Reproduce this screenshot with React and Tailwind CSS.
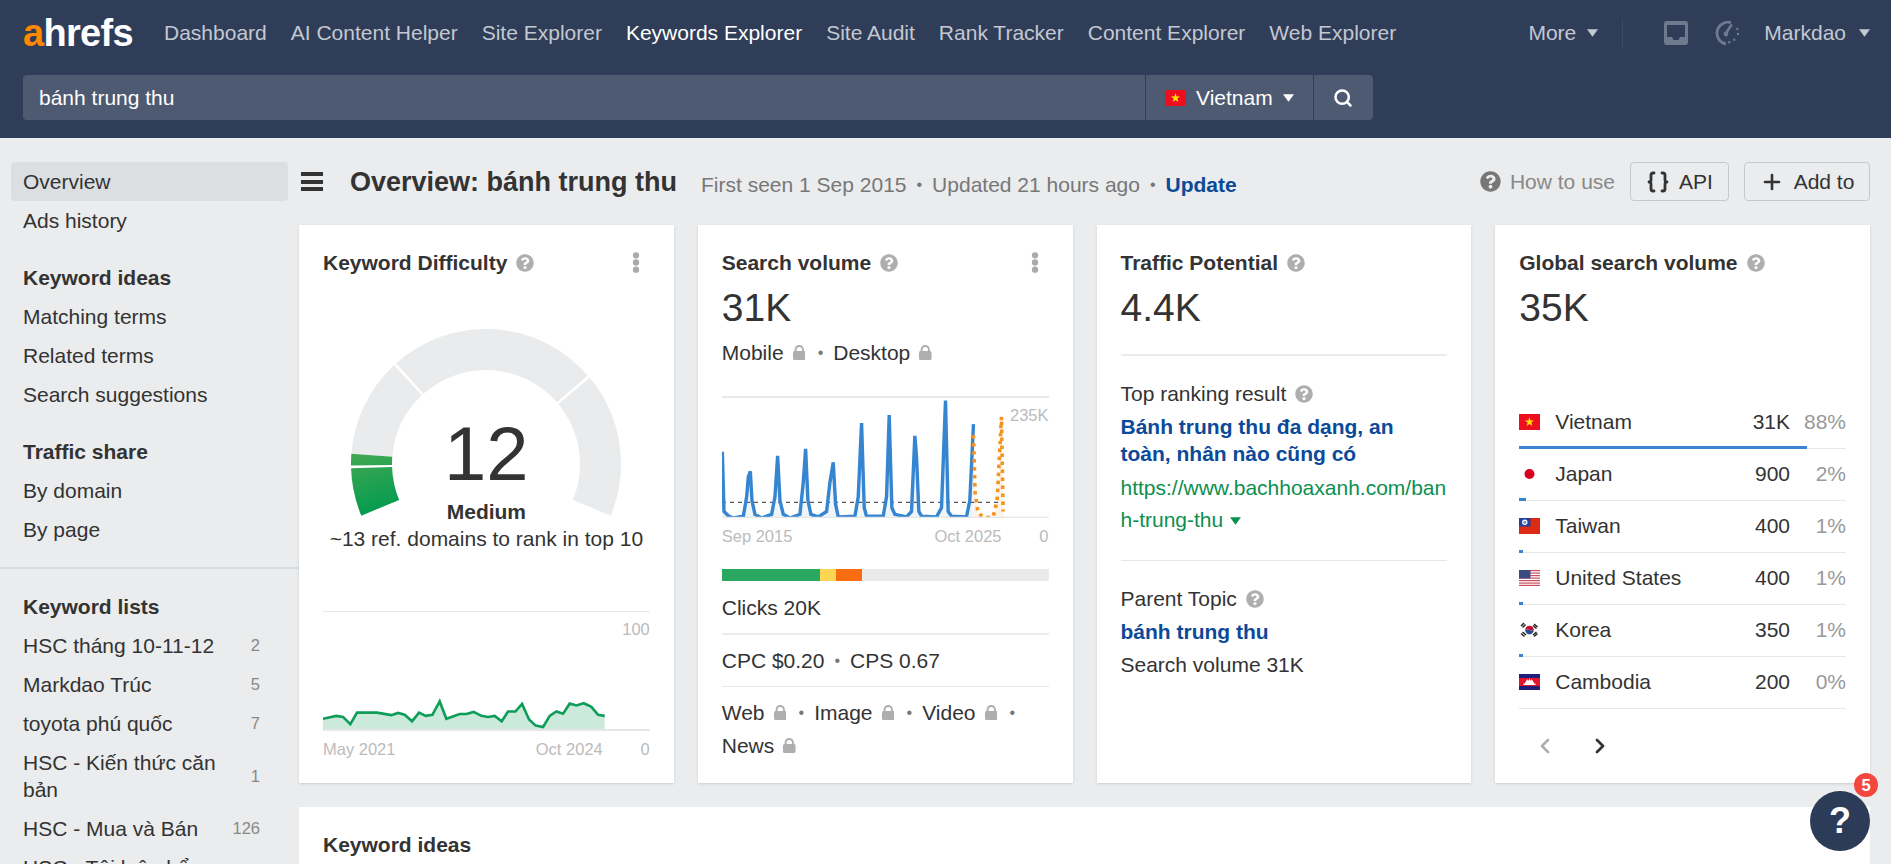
import { Braces, ChevronLeft, ChevronRight, Plus, Search } from "lucide-react";
import { FaQuestionCircle } from "react-icons/fa";

const navItems = ["Dashboard", "AI Content Helper", "Site Explorer", "Keywords Explorer", "Site Audit", "Rank Tracker", "Content Explorer", "Web Explorer"];

const kdPoints = [[100,1373],[140,1365],[160,1368],[182,1388],[202,1356],[262,1356],[305,1363],[325,1357],[345,1362],[367,1380],[388,1356],[408,1365],[428,1362],[450,1325],[470,1373],[510,1360],[530,1360],[552,1354],[575,1365],[595,1368],[615,1365],[636,1380],[655,1353],[677,1353],[697,1332],[718,1375],[738,1392],[760,1396],[780,1365],[800,1353],[820,1359],[840,1331],[860,1336],[882,1330],[905,1340],[925,1362],[945,1365]];

const svPoints = [[97,636],[102,800],[115,812],[130,818],[160,813],[170,760],[175,705],[181,690],[186,770],[195,808],[215,818],[245,808],[255,760],[263,647],[270,770],[280,808],[300,818],[330,808],[340,720],[347,628],[354,770],[363,808],[385,815],[410,800],[420,720],[430,665],[437,780],[445,815],[495,813],[505,760],[515,557],[523,790],[530,813],[580,813],[590,760],[598,535],[606,790],[615,808],[650,815],[665,800],[675,592],[680,650],[687,800],[695,813],[740,815],[755,790],[767,495],[775,800],[785,813],[830,815],[840,770],[851,560]];

const svForecast = [[851,590],[856,750],[865,805],[885,817],[910,815],[922,770],[935,540],[940,800]];

const line = (pts) => pts.map((p) => p.join(",")).join(" ");

const Help = ({ className = "" }) => <FaQuestionCircle className={`text-[18px] text-[#aeaeae] shrink-0 ${className}`} />;

const Caret = ({ className = "" }) => (
  <svg viewBox="0 0 10 7" className={`w-[11px] h-[8px] shrink-0 ${className}`} fill="currentColor"><path d="M0 0h10L5 7z" /></svg>
);

const Dots = () => (
  <svg viewBox="0 0 8 22" className="w-[8px] h-[21px] text-[#aaa] mr-[10px]" fill="currentColor">
    <circle cx="4" cy="3.5" r="3.3" /><circle cx="4" cy="11" r="3.3" /><circle cx="4" cy="18.5" r="3.3" />
  </svg>
);

const Lock = ({ className = "" }) => (
  <svg viewBox="0 0 12.5 15" className={`w-[12.5px] h-[15px] text-[#aeaeae] inline-block shrink-0 ml-[9px] mr-[2.5px] ${className}`} fill="currentColor">
    <path d="M2.6 7V4.6a3.65 3.65 0 0 1 7.3 0V7" fill="none" stroke="currentColor" strokeWidth="1.9" />
    <rect x="0" y="6" width="12.5" height="9" rx="1.5" />
  </svg>
);

const Sep = () => <span className="text-[#777] text-[16px] mx-[10px]">•</span>;

function sector(startDeg, endDeg) {
  const cx = 135, cy = 135, R = 135, r = 94;
  const pt = (rad, deg) => {
    const a = (deg * Math.PI) / 180;
    return `${(cx - rad * Math.cos(a)).toFixed(2)} ${(cy - rad * Math.sin(a)).toFixed(2)}`;
  };
  const large = endDeg - startDeg > 180 ? 1 : 0;
  return `M${pt(R, startDeg)} A${R} ${R} 0 ${large} 1 ${pt(R, endDeg)} L${pt(r, endDeg)} A${r} ${r} 0 ${large} 0 ${pt(r, startDeg)} Z`;
}

const Gauge = () => (
  <svg viewBox="0 0 270 190" className="w-[270px] h-[190px]">
    <defs>
      <linearGradient id="kdGreen" gradientUnits="userSpaceOnUse" x1="10" y1="125" x2="30" y2="186">
        <stop offset="0" stopColor="#3fa853" />
        <stop offset="1" stopColor="#009a50" />
      </linearGradient>
    </defs>
    <path d={sector(4.4, 47)} fill="#eaebec" />
    <path d={sector(48.3, 139)} fill="#eaebec" />
    <path d={sector(140.3, 202.5)} fill="#eaebec" />
    <path d={sector(-22.5, -1.8)} fill="url(#kdGreen)" />
    <path d={sector(-0.6, 4.4)} fill="url(#kdGreen)" />
  </svg>
);

const VN = () => (
  <svg viewBox="0 0 21 16" className="w-[21px] h-[16px] shrink-0">
    <rect width="21" height="16" fill="#ee0f1e" />
    <path d="M10.5 3.2l1.1 3.3h3.5l-2.8 2.1 1 3.3-2.8-2-2.8 2 1-3.3-2.8-2.1h3.5z" fill="#ffe600" />
  </svg>
);

const JP = () => (
  <svg viewBox="0 0 21 16" className="w-[21px] h-[16px] shrink-0">
    <circle cx="10.5" cy="8" r="5" fill="#d8001e" />
  </svg>
);

const TW = () => (
  <svg viewBox="0 0 21 16" className="w-[21px] h-[16px] shrink-0">
    <rect width="21" height="16" fill="#dd2a15" />
    <rect width="11.5" height="8.5" fill="#24409a" />
    <circle cx="5.8" cy="4.2" r="2.7" fill="#fff" />
    <circle cx="5.8" cy="4.2" r="1.5" fill="#6f8fd0" />
  </svg>
);

const US = () => (
  <svg viewBox="0 0 21 16" className="w-[21px] h-[16px] shrink-0">
    <rect width="21" height="16" fill="#fff" />
    {[0, 2.5, 5, 7.5, 10, 12.5, 14.8].map((y) => <rect key={y} y={y} width="21" height="1.2" fill="#c9505c" />)}
    <rect width="11.5" height="8.5" fill="#3c4a80" />
  </svg>
);

const KR = () => (
  <svg viewBox="0 0 21 16" className="w-[21px] h-[16px] shrink-0">
    <path d="M6.2 8a4.3 4.3 0 0 1 8.6 0z" fill="#c60c30" transform="rotate(15 10.5 8)" />
    <path d="M6.2 8a4.3 4.3 0 0 0 8.6 0z" fill="#2a4a90" transform="rotate(15 10.5 8)" />
    <g stroke="#222" strokeWidth="1.5">
      <path d="M2 4l3-3M3.5 5.5l3-3" />
      <path d="M15 2l3.5 3M14 3.5l3.5 3" />
      <path d="M2 11.5l3.5 3M3.5 10l3.5 3" />
      <path d="M15 14.5l3.5-3M14 13l3.5-3" />
    </g>
  </svg>
);

const KH = () => (
  <svg viewBox="0 0 21 16" className="w-[21px] h-[16px] shrink-0">
    <rect width="21" height="16" fill="#20207c" />
    <rect y="4" width="21" height="8" fill="#e2162e" />
    <path d="M4.5 11V9.5H6V8h1V6.5h1.2L8.7 5l.6 1.5h.6L10.5 4l.6 2.5h.6l.6-1.5.5 1.5H14V8h1v1.5h1.5V11z" fill="#fff" />
  </svg>
);

const countries = [
  { flag: <VN />, name: "Vietnam", vol: "31K", pct: "88%", bar: 288 },
  { flag: <JP />, name: "Japan", vol: "900", pct: "2%", bar: 7 },
  { flag: <TW />, name: "Taiwan", vol: "400", pct: "1%", bar: 4 },
  { flag: <US />, name: "United States", vol: "400", pct: "1%", bar: 4 },
  { flag: <KR />, name: "Korea", vol: "350", pct: "1%", bar: 4 },
  { flag: <KH />, name: "Cambodia", vol: "200", pct: "0%", bar: 0 },
];

const listItems = [
  { name: "HSC tháng 10-11-12", n: 2 },
  { name: "Markdao Trúc", n: 5 },
  { name: "toyota phú quốc", n: 7 },
  { name: "HSC - Kiến thức căn bản", n: 1 },
  { name: "HSC - Mua và Bán", n: 126 },
  { name: "HSC - Tôi luận bổ" },
];

const SideLink = ({ children, active }) => (
  <div className={`h-[39px] mx-[11px] px-3 flex items-center rounded-[4px] ${active ? "bg-[#dcdfe2]" : ""}`}>{children}</div>
);

const Sidebar = () => (
  <aside className="w-[299px] shrink-0 pt-6">
    <SideLink active>Overview</SideLink>
    <SideLink>Ads history</SideLink>
    <div className="mt-[18px]">
      <SideLink><b>Keyword ideas</b></SideLink>
      <SideLink>Matching terms</SideLink>
      <SideLink>Related terms</SideLink>
      <SideLink>Search suggestions</SideLink>
    </div>
    <div className="mt-[18px]">
      <SideLink><b>Traffic share</b></SideLink>
      <SideLink>By domain</SideLink>
      <SideLink>By page</SideLink>
    </div>
    <div className="mt-[18px] border-t-2 border-[#d9dcdf] pt-[18px]">
      <SideLink><b>Keyword lists</b></SideLink>
      {listItems.map((item) => (
        <div key={item.name} className="mx-[11px] pl-3 pr-[28px] py-1.5 flex items-center justify-between leading-[27px]">
          <span className="w-[200px]">{item.name}</span>
          <span className="text-[16.5px] text-[#888]">{item.n}</span>
        </div>
      ))}
    </div>
  </aside>
);

const Header = () => (
  <header className="h-[138px] shrink-0 bg-[#2f3d58] px-[23px]">
    <div className="h-[66px] flex items-center text-[#c3c8d1]">
      <div className="w-[141px] text-[38px] font-bold tracking-[-0.7px] text-white leading-none -mt-[1px]"><span className="text-[#ff8800]">a</span>hrefs</div>
      <nav className="flex gap-6">
        {navItems.map((item) => (
          <span key={item} className={item === "Keywords Explorer" ? "text-white" : ""}>{item}</span>
        ))}
      </nav>
      <div className="ml-auto flex items-center mr-[-2px]">
        <span>More</span>
        <Caret className="ml-[11px]" />
        <div className="w-px h-[30px] bg-[#3b4963] ml-[24px] mr-[41px]" />
        <svg viewBox="0 0 24 24" className="w-[24px] h-[24px] text-[#6e7a8d]" fill="currentColor">
          <path d="M3 0h18a3 3 0 0 1 3 3v18a3 3 0 0 1-3 3H3a3 3 0 0 1-3-3V3a3 3 0 0 1 3-3zM3 4v12h5l1.5 3h5l1.5-3h5V4z" />
        </svg>
        <svg viewBox="0 0 26 26" className="w-[26px] h-[26px] ml-[26px] text-[#6e7a8d]" fill="none" stroke="currentColor">
          <path d="M17 2.6A11 11 0 1 0 12 24" strokeWidth="2.8" />
          <path d="M11.5 14L17.7 4.5" strokeWidth="2.6" />
          <circle cx="12" cy="14" r="2.4" fill="currentColor" stroke="none" />
          <g fill="currentColor" stroke="none">
            <circle cx="23.3" cy="9" r="1.2" /><circle cx="24" cy="14" r="1.2" /><circle cx="20.3" cy="19.7" r="1.2" /><circle cx="15.3" cy="22.3" r="1.2" />
          </g>
        </svg>
        <span className="ml-[24px]">Markdao</span>
        <Caret className="ml-[13px]" />
      </div>
    </div>
    <div className="mt-[9px] h-[45px] w-[1350px] flex text-white rounded-[4px] overflow-hidden gap-px">
      <div className="flex-1 bg-[#4d5a71] pl-4 flex items-center">bánh trung thu</div>
      <div className="w-[167px] bg-[#4d5a71] pl-[19px] flex items-center">
        <VN />
        <span className="ml-[10px]">Vietnam</span>
        <Caret className="ml-[10px]" />
      </div>
      <div className="w-[59px] bg-[#4d5a71] pr-[2px] flex items-center justify-center"><Search size={20} strokeWidth={3} /></div>
    </div>
  </header>
);

const TitleRow = () => (
  <div className="h-[39px] flex items-center">
    <div className="w-[22px] h-[19px] ml-[2px] flex flex-col justify-between">
      <div className="h-[4px] bg-[#333]" /><div className="h-[4px] bg-[#333]" /><div className="h-[4px] bg-[#333]" />
    </div>
    <h1 className="ml-[27px] mt-[2px] text-[27px] font-bold">Overview: bánh trung thu</h1>
    <div className="ml-[24px] mt-[6px] text-[#777] flex items-center">
      First seen 1 Sep 2015<span className="mx-[10px] text-[16px]">•</span>Updated 21 hours ago<span className="mx-[10px] text-[16px]">•</span><b className="text-[#0b4a99]">Update</b>
    </div>
    <div className="ml-auto flex items-center">
      <FaQuestionCircle className="text-[21px] text-[#777]" />
      <span className="ml-[9px] text-[#888]">How to use</span>
      <button className="ml-[15px] w-[99px] h-[39px] border border-[#c6c9cc] rounded-[4px] flex items-center justify-center gap-[9px]">
        <Braces size={24} strokeWidth={2.8} />API
      </button>
      <button className="ml-[15px] w-[126px] h-[39px] border border-[#c6c9cc] rounded-[4px] flex items-center justify-center gap-[10px]">
        <Plus size={24} strokeWidth={2.6} />Add to
      </button>
    </div>
  </div>
);

const CardTitle = ({ children, menu }) => (
  <div className="h-[27px] flex items-center font-bold">
    {children}
    <Help className="ml-[9px]" />
    {menu && <div className="ml-auto flex"><Dots /></div>}
  </div>
);

const Value = ({ children }) => <div className="mt-[9px] text-[39px] leading-[45px]">{children}</div>;

const Axis = ({ left, right, end }) => (
  <div className="relative h-[20px] text-[16.5px] text-[#bbb]">
    <span className="absolute left-0 top-0 leading-[20px]">{left}</span>
    <span className="absolute right-[47px] top-0 leading-[20px]">{right}</span>
    <span className="absolute right-0 top-0 leading-[20px]">{end}</span>
  </div>
);

const DifficultyCard = () => (
  <section className="bg-white shadow-sm px-6 pt-6 h-[558px]">
    <CardTitle menu>Keyword Difficulty</CardTitle>
    <div className="relative mt-[53px] flex justify-center h-[190px]">
      <Gauge />
      <div className="absolute inset-x-0 top-[84px] text-center text-[76px] leading-[82px]">12</div>
    </div>
    <div className="text-center font-bold leading-[27px] -mt-[21px]">Medium</div>
    <div className="text-center leading-[27px]">~13 ref. domains to rank in top 10</div>
    <div className="relative mt-[59px] h-[120px] border-t border-[#e8e8e8]">
      <span className="absolute right-0 top-[5px] text-[16.5px] text-[#bbb]">100</span>
      <svg viewBox="100 1077 980 330" preserveAspectRatio="none" className="w-full h-full">
        <polygon points={`100,1403 ${line(kdPoints)} 945,1403`} fill="#cbeadc" />
        <polyline points={line(kdPoints)} fill="none" stroke="#0e9d58" strokeWidth="2.6" vectorEffect="non-scaling-stroke" />
        <line x1="100" y1="1404" x2="1080" y2="1404" stroke="#e6e6e6" strokeWidth="2" vectorEffect="non-scaling-stroke" />
      </svg>
    </div>
    <div className="mt-[8px]"><Axis left="May 2021" right="Oct 2024" end="0" /></div>
  </section>
);

const VolumeCard = () => (
  <section className="bg-white shadow-sm px-6 pt-6 h-[558px]">
    <CardTitle menu>Search volume</CardTitle>
    <Value>31K</Value>
    <div className="mt-[6px] h-[33px] flex items-center">
      Mobile<Lock /><Sep />Desktop<Lock />
    </div>
    <div className="relative mt-[27px] h-[122px] border-t-2 border-[#e9e9e9]">
      <span className="absolute right-0 top-[5px] text-[16.5px] text-[#bbb]">235K</span>
      <svg viewBox="96 488 981 330" preserveAspectRatio="none" className="w-full h-full">
        <polygon points={`97,817 ${line(svPoints)} 851,817`} fill="#eef5fb" />
        <polygon points="851,817 851,590 856,750 865,805 885,817 910,815 922,770 935,540 942,800 942,817" fill="#fdf3e6" />
        <line x1="96" y1="775" x2="935" y2="775" stroke="#555" strokeWidth="1.4" strokeDasharray="4 4" vectorEffect="non-scaling-stroke" />
        <polyline points={line(svPoints)} fill="none" stroke="#3585d1" strokeWidth="3.4" vectorEffect="non-scaling-stroke" />
        <polyline points={line(svForecast)} fill="none" stroke="#f6921e" strokeWidth="3.6" strokeDasharray="3.5 4.5" vectorEffect="non-scaling-stroke" />
        <line x1="96" y1="817" x2="1077" y2="817" stroke="#e6e6e6" strokeWidth="2" vectorEffect="non-scaling-stroke" />
      </svg>
    </div>
    <div className="mt-[8px]"><Axis left="Sep 2015" right="Oct 2025" end="0" /></div>
    <div className="mt-[23px] h-[12px] flex bg-[#eaeaea]">
      <div className="w-[98px] bg-[#2aa862]" />
      <div className="w-[16px] bg-[#fbd653]" />
      <div className="w-[26px] bg-[#fa6c12]" />
    </div>
    <div className="mt-[10px] h-[33px] flex items-center">Clicks 20K</div>
    <div className="mt-[9px] border-t-2 border-[#ebebeb]" />
    <div className="mt-[9px] h-[33px] flex items-center">CPC $0.20<Sep />CPS 0.67</div>
    <div className="mt-[9px] border-t border-[#e6e6e6]" />
    <div className="mt-[9px] leading-[33px]">
      <div className="h-[33px] flex items-center">Web<Lock /><Sep />Image<Lock /><Sep />Video<Lock /><Sep /></div>
      <div className="h-[33px] flex items-center">News<Lock /></div>
    </div>
  </section>
);

const PotentialCard = () => (
  <section className="bg-white shadow-sm px-6 pt-6 h-[558px]">
    <CardTitle>Traffic Potential</CardTitle>
    <Value>4.4K</Value>
    <div className="mt-[24px] border-t-2 border-[#ebebeb]" />
    <div className="mt-[24px] h-[27px] flex items-center">Top ranking result<Help className="ml-[9px]" /></div>
    <div className="mt-[6px] font-bold leading-[27px] text-[#0b4a99]">Bánh trung thu đa dạng, an toàn, nhân nào cũng có</div>
    <div className="mt-[5px] leading-[32px] text-[#0d8f4f] break-all">
      https://www.bachhoaxanh.com/banh-trung-thu<Caret className="inline-block ml-[7px] mb-[1px]" />
    </div>
    <div className="mt-[24px] border-t border-[#e6e6e6]" />
    <div className="mt-[24px] h-[27px] flex items-center">Parent Topic<Help className="ml-[9px]" /></div>
    <div className="mt-[6px] font-bold leading-[27px] text-[#0b4a99]">bánh trung thu</div>
    <div className="mt-[6px] leading-[27px]">Search volume 31K</div>
  </section>
);

const GlobalCard = () => (
  <section className="bg-white shadow-sm px-6 pt-6 h-[558px]">
    <CardTitle>Global search volume</CardTitle>
    <Value>35K</Value>
    <div className="mt-[67px]">
      {countries.map((c) => (
        <div key={c.name} className="relative h-[52px] flex items-center pb-[2px] border-b border-[#e6e6e6]">
          {c.flag}
          <span className="ml-[15px] flex-1">{c.name}</span>
          <span>{c.vol}</span>
          <span className="w-[56px] text-right text-[#999]">{c.pct}</span>
          <div className="absolute left-0 -bottom-px h-[3px] bg-[#3a84cf]" style={{ width: c.bar }} />
        </div>
      ))}
    </div>
    <div className="mt-[25px] flex items-center pl-[14px]">
      <ChevronLeft size={24} strokeWidth={2.6} className="text-[#aeaeae]" />
      <ChevronRight size={24} strokeWidth={2.8} className="ml-[31px] text-[#333]" />
    </div>
  </section>
);

const App = () => (
  <div className="relative h-screen overflow-hidden flex flex-col bg-[#eaecee] text-[#333] text-[21px] font-['Liberation_Sans',Arial,sans-serif]">
    <Header />
    <div className="flex flex-1 min-h-0">
      <Sidebar />
      <main className="flex-1 min-w-0 pt-6 pr-[21px]">
        <TitleRow />
        <div className="mt-6 grid grid-cols-4 gap-6">
          <DifficultyCard />
          <VolumeCard />
          <PotentialCard />
          <GlobalCard />
        </div>
        <div className="mt-6 bg-white h-[200px] px-6 pt-[22px] font-bold">Keyword ideas</div>
      </main>
    </div>
    <button className="absolute left-[1810px] top-[791px] w-[60px] h-[60px] rounded-full bg-[#2c3b57] text-white text-[36px] font-bold flex items-center justify-center">
      ?
      <span className="absolute -top-[18px] -right-[8px] w-[24px] h-[24px] rounded-full bg-[#f4483f] text-[16.5px] leading-[24px] text-center">5</span>
    </button>
  </div>
);

export default App;
